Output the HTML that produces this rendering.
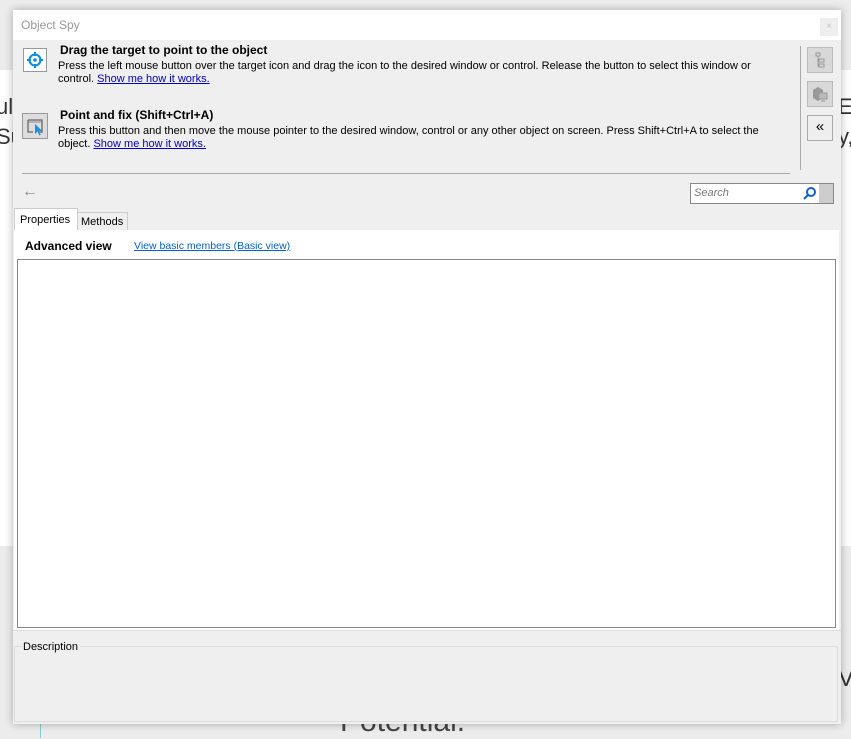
<!DOCTYPE html>
<html><head><style>
body{margin:0;width:851px;height:738px;background:#ececec;position:relative;overflow:hidden;font-family:"Liberation Sans",sans-serif;}
.abs{position:absolute}
.t{font-size:11px;color:#000;line-height:13px}
a{color:#0000cc;text-decoration:underline}
</style></head><body>
<div class="abs" style="left:0;top:70px;width:851px;height:476px;background:#fff"></div>
<div class="abs" style="left:-4px;top:92px;font-size:22px;color:#333;line-height:30px">ul<br>Su</div>
<div class="abs" style="left:838px;top:92px;font-size:22px;color:#333;line-height:30px">E<br>y,</div>
<div class="abs" style="left:838px;top:665px;font-size:24px;color:#333">V</div>
<div class="abs" style="left:340px;top:705px;font-size:30px;color:#444">Potential.</div>
<div class="abs" style="left:40px;top:660px;width:1px;height:78px;background:#8cc"></div>
<div class="abs" style="left:13px;top:10px;width:828px;height:714px;background:#efefef;box-shadow:0 0 8px rgba(0,0,0,.3)">
 <div class="abs" style="left:0;top:0;width:828px;height:30px;background:#fff"></div>
 <div class="abs" style="left:8px;top:8px;font-size:12px;color:#999">Object Spy</div>
 <div class="abs" style="left:807px;top:8px;width:18px;height:18px;background:#eee;color:#ccc;font-size:10px;text-align:center;line-height:18px">×</div>
 <div class="abs" style="left:10px;top:38px;width:22px;height:22px;border:1px solid #999;background:#fff">
  <svg width="22" height="22"><circle cx="11" cy="11" r="5.5" fill="none" stroke="#0a8ee0" stroke-width="2"/><circle cx="11" cy="11" r="1.8" fill="#0a8ee0"/><path d="M11 3v4M11 15v4M3 11h4M15 11h4" stroke="#0a8ee0" stroke-width="2"/></svg>
 </div>
 <div class="abs t" style="left:47px;top:34px;font-weight:bold;font-size:12px">Drag the target to point to the object</div>
 <div class="abs t" style="left:45px;top:50px;width:700px">Press the left mouse button over the target icon and drag the icon to the desired window or control. Release the button to select this window or control. <a>Show me how it works.</a></div>
 <div class="abs" style="left:9px;top:103px;width:24px;height:24px;border:1px solid #999;background:#ddd">
  <svg width="24" height="24"><path d="M5 6h14v12h-4M5 6v12h5" fill="none" stroke="#666" stroke-width="1.3"/><path d="M5 8h14" stroke="#888"/><path d="M12 10l0 10 2.5-2.5 2 4 1.3-.7-2-3.8h3.5z" fill="#1a8fe0"/></svg>
 </div>
 <div class="abs t" style="left:47px;top:99px;font-weight:bold;font-size:12px">Point and fix (Shift+Ctrl+A)</div>
 <div class="abs t" style="left:45px;top:115px;width:720px">Press this button and then move the mouse pointer to the desired window, control or any other object on screen. Press Shift+Ctrl+A to select the object. <a>Show me how it works.</a></div>
 <div class="abs" style="left:787px;top:36px;width:1px;height:124px;background:#aaa"></div>
 <div class="abs" style="left:9px;top:163px;width:768px;height:1px;background:#aaa"></div>
 <div class="abs" style="left:794px;top:37px;width:24px;height:24px;border:1px solid #bbb;background:#d8d8d8">
  <svg width="24" height="24"><path d="M8 5h4v3h-4zM11 11h5v3h-5zM11 16h5v3h-5zM10 8v10h1M10 12h1" fill="none" stroke="#999"/></svg></div>
 <div class="abs" style="left:794px;top:71px;width:24px;height:24px;border:1px solid #bbb;background:#d8d8d8">
  <svg width="24" height="24"><path d="M5 8l5-3 5 3v8l-5 3-5-3z" fill="#999"/><rect x="11" y="11" width="8" height="6" fill="#bbb" stroke="#999"/><path d="M13 19h4" stroke="#999"/></svg></div>
 <div class="abs" style="left:794px;top:105px;width:24px;height:24px;border:1px solid #aaa;background:#eee;font-size:15px;text-align:center;line-height:22px">«</div>
 <div class="abs" style="left:9px;top:173px;color:#888;font-size:16px">←</div>
 <div class="abs" style="left:677px;top:173px;width:142px;height:19px;border:1px solid #888;background:#fff">
  <span class="abs" style="left:3px;top:3px;font-size:11px;color:#777;font-style:italic">Search</span>
  <svg class="abs" style="left:112px;top:2px" width="14" height="14"><circle cx="8" cy="6" r="4" fill="none" stroke="#1060d0" stroke-width="2"/><path d="M5 9l-4 4" stroke="#1060d0" stroke-width="2"/></svg>
  <div class="abs" style="left:128px;top:0;width:14px;height:19px;background:#ccc"></div>
 </div>
 <div class="abs" style="left:1px;top:198px;width:62px;height:23px;background:#fff;border:1px solid #ccc;border-bottom:none"></div>
 <div class="abs t" style="left:7px;top:204px">Properties</div>
 <div class="abs" style="left:64px;top:202px;width:49px;height:18px;border:1px solid #ccc;border-bottom:none"></div>
 <div class="abs t" style="left:68px;top:206px">Methods</div>
 <div class="abs" style="left:1px;top:220px;width:825px;height:400px;background:#fff"></div>
 <div class="abs t" style="left:12px;top:230px;font-weight:bold;font-size:12px">Advanced view</div>
 <div class="abs t" style="left:121px;top:230px;font-size:10.5px"><a style="color:#0060d0">View basic members (Basic view)</a></div>
 <div class="abs" style="left:4px;top:249px;width:817px;height:367px;border:1px solid #888;background:#fff"></div>
 <div class="abs" style="left:0;top:620px;width:828px;height:1px;background:#ddd"></div>
 <div class="abs" style="left:1px;top:636px;width:822px;height:74px;border:1px solid #ddd"></div>
 <div class="abs t" style="left:10px;top:631px;background:#efefef;padding-right:2px">Description</div>
</div>
</body></html>
